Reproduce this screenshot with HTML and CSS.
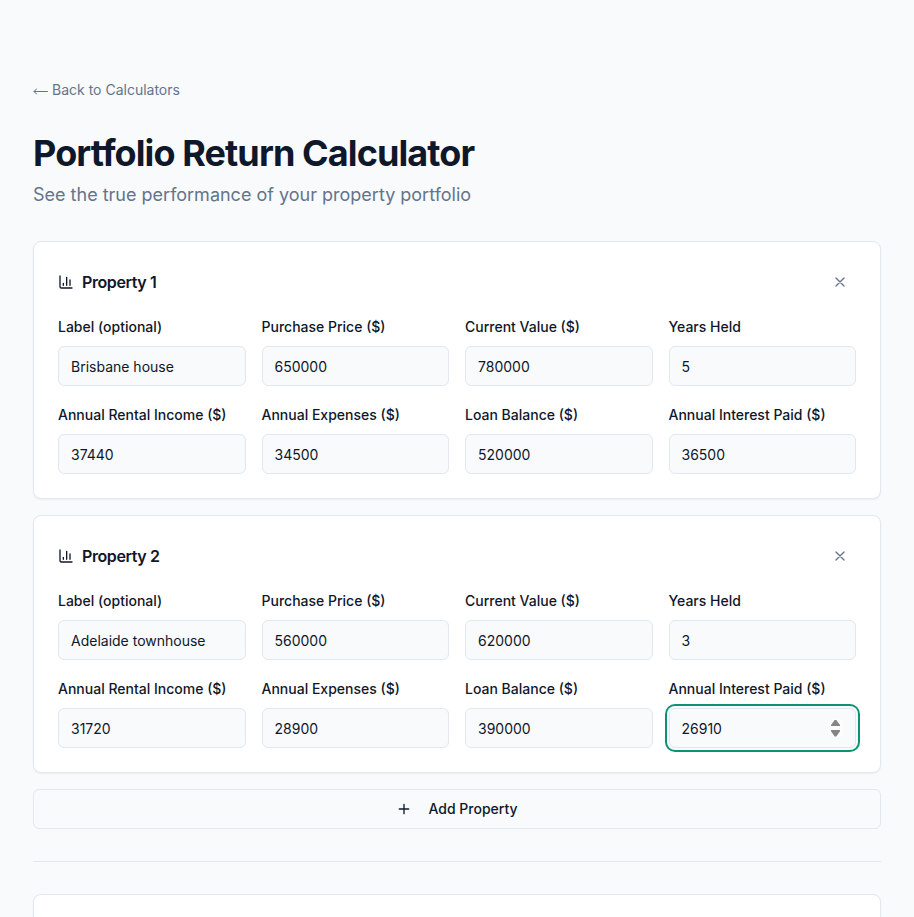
FILE: index.html
```html
<!DOCTYPE html>
<html lang="en">
<head>
<meta charset="utf-8">
<title>Portfolio Return Calculator</title>
<link rel="stylesheet" href="styles.css">
</head>
<body>
<main class="page">
  <a class="back"><svg class="arrow" viewBox="0 0 15 9"><path d="M14.5 4.5H1M3.5 2Q2.5 3.8 .8 4.5 2.5 5.2 3.5 7"/></svg>Back to Calculators</a>
  <h1>Portfolio Return Calculator</h1>
  <p class="lead">See the true performance of your property portfolio</p>
  <div class="list">
    <section class="card">
      <header class="card-head">
        <h2><svg class="chart" viewBox="0 0 24 24"><path d="M3 3v16a2 2 0 0 0 2 2h16M8 17v-3M13 17V5M18 17V9"/></svg>Property 1</h2>
        <button class="remove" aria-label="Remove"><svg viewBox="0 0 24 24"><path d="M18 6 6 18M6 6l12 12"/></svg></button>
      </header>
      <div class="fields">
        <label>Label (optional)<span class="input">Brisbane house</span></label>
        <label>Purchase Price ($)<span class="input">650000</span></label>
        <label>Current Value ($)<span class="input">780000</span></label>
        <label>Years Held<span class="input">5</span></label>
        <label>Annual Rental Income ($)<span class="input">37440</span></label>
        <label>Annual Expenses ($)<span class="input">34500</span></label>
        <label>Loan Balance ($)<span class="input">520000</span></label>
        <label>Annual Interest Paid ($)<span class="input">36500</span></label>
      </div>
    </section>
    <section class="card">
      <header class="card-head">
        <h2><svg class="chart" viewBox="0 0 24 24"><path d="M3 3v16a2 2 0 0 0 2 2h16M8 17v-3M13 17V5M18 17V9"/></svg>Property 2</h2>
        <button class="remove" aria-label="Remove"><svg viewBox="0 0 24 24"><path d="M18 6 6 18M6 6l12 12"/></svg></button>
      </header>
      <div class="fields">
        <label>Label (optional)<span class="input">Adelaide townhouse</span></label>
        <label>Purchase Price ($)<span class="input">560000</span></label>
        <label>Current Value ($)<span class="input">620000</span></label>
        <label>Years Held<span class="input">3</span></label>
        <label>Annual Rental Income ($)<span class="input">31720</span></label>
        <label>Annual Expenses ($)<span class="input">28900</span></label>
        <label>Loan Balance ($)<span class="input">390000</span></label>
        <label>Annual Interest Paid ($)<span class="input focused">26910<svg class="spin" viewBox="0 0 15 18"><path d="M6.7 1h1.6L12 6v1H3V6zM6.7 17.5h1.6L12 12.2V11H3v1.2z"/></svg></span></label>
      </div>
    </section>
    <button class="add"><svg viewBox="0 0 24 24"><path d="M5 12h14M12 5v14"/></svg>Add Property</button>
  </div>
  <hr>
  <section class="card results"></section>
</main>
</body>
</html>
```
FILE: styles.css
```css
* { box-sizing: border-box; margin: 0; padding: 0; }
body { background: #f8fafc; color: #0f172a; font: 14px/20px Inter, "Liberation Sans", sans-serif; }
svg { fill: none; stroke: currentColor; stroke-width: 2; stroke-linecap: round; stroke-linejoin: round; width: 16px; height: 16px; flex: none; }
button { font: inherit; color: inherit; background: none; border: 0; }
.page { height: 917px; overflow: hidden; padding: 80px 33px 0; }
.back { display: flex; align-items: center; gap: 4px; height: 20px; color: #64748b; }
.arrow { width: 15px; height: 9px; margin-top: 3px; stroke-width: 1; }
h1 { margin-top: 33px; font-size: 36px; line-height: 40px; font-weight: 700; letter-spacing: -0.9px; }
.lead { margin-top: 8px; font-size: 18px; line-height: 28px; color: #64748b; }
.list { display: flex; flex-direction: column; gap: 16px; margin-top: 32px; }
.card { height: 258px; padding: 24px; background: #fff; border: 1px solid #e2e8f0; border-radius: 8px; box-shadow: 0 1px 2px rgba(0,0,0,.05); }
.card-head { display: flex; justify-content: space-between; align-items: center; height: 32px; }
h2 { display: flex; align-items: center; gap: 8px; font-size: 16px; line-height: 24px; font-weight: 600; letter-spacing: -0.4px; }
.remove { display: flex; align-items: center; justify-content: center; width: 32px; height: 32px; color: #64748b; }
.fields { display: grid; grid-template-columns: repeat(4, 1fr); gap: 16px; margin-top: 16px; }
.fields label { display: flex; flex-direction: column; gap: 9px; height: 72px; padding-top: 3px; line-height: 20px; font-weight: 500; }
.input { display: flex; align-items: center; justify-content: space-between; height: 40px; padding: 2px 12px 0; background: #f8fafc; border: 1px solid #e2e8f0; border-radius: 6px; font-weight: 400; }
.focused { box-shadow: 0 0 0 2px #f8fafc, 0 0 0 4px #0d9373; }
.spin { width: 15px; height: 18px; margin-top: -2px; background: #fcfcfc; fill: #858585; stroke: none; }
.add { display: flex; align-items: center; justify-content: center; gap: 16px; height: 40px; border: 1px solid #e2e8f0; border-radius: 6px; font-weight: 500; }
hr { margin: 32px 0; border: 0; border-top: 1px solid #e2e8f0; }
.results { height: 200px; }
```
